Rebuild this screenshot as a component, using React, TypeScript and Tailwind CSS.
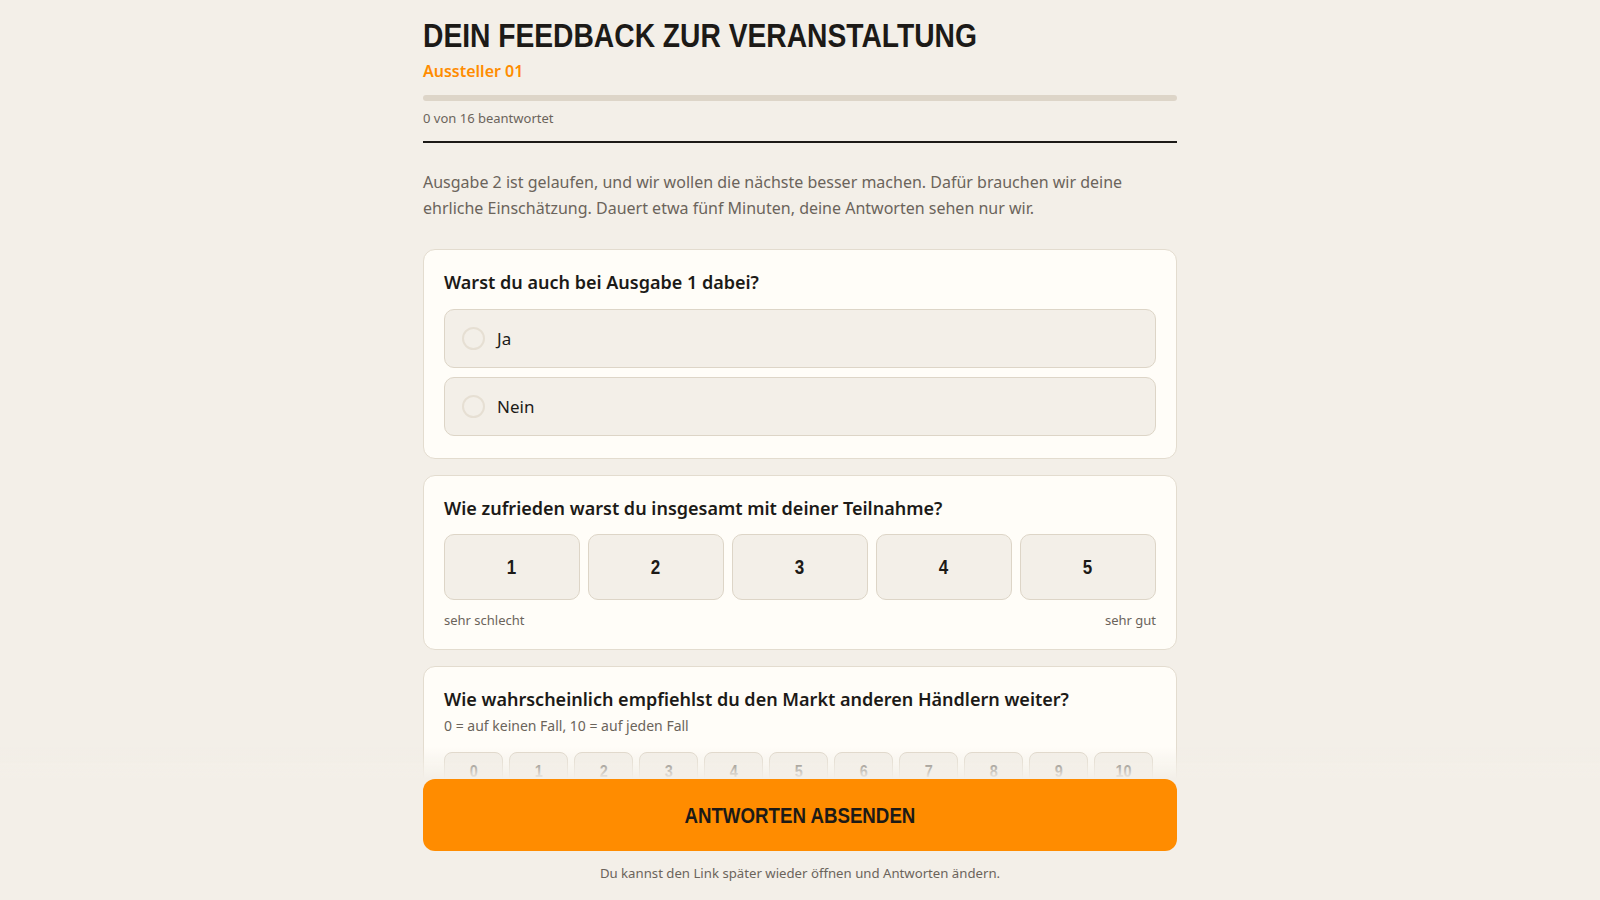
import React from 'react';

// no narrow face installed, so the Arial-narrow look is squeezed from Liberation Sans
const NARROW = "font-['Liberation_Sans_Narrow','Arial_Narrow','Liberation_Sans',sans-serif]";

function Card({ children, tight }: { children: React.ReactNode; tight?: boolean }) {
  return (
    <div
      className={`rounded-xl border border-[#e3dccf] bg-[#fffdf8] px-5 pt-5 ${tight ? 'pb-[20px]' : 'pb-[22px]'}`}
    >
      {children}
    </div>
  );
}

function Question({ children }: { children: React.ReactNode }) {
  return <h2 className="text-[18px] leading-[1.4] font-semibold text-[#1c1a17]">{children}</h2>;
}

function Narrow({ children }: { children: React.ReactNode }) {
  return <span className="inline-block scale-x-[0.85]">{children}</span>;
}

export default function App() {
  return (
    <div className="min-h-screen bg-[#f3efe8] font-['Segoe_UI','Noto_Sans',sans-serif] text-[#1c1a17]">
      <div className="mx-auto w-[754px] pt-[18px] pb-10">
        <header className="border-b-2 border-[#1c1a17] pb-[14px]">
          <h1
            className={`${NARROW} inline-block origin-left scale-x-[0.855] text-[33px] leading-[1.1] font-bold whitespace-nowrap`}
          >
            DEIN FEEDBACK ZUR VERANSTALTUNG
          </h1>
          <div className="mt-[5px] text-[16px] font-semibold text-[#ff8c00]">Aussteller 01</div>
          <div className="mt-[12px] h-[6px] rounded-full bg-[#ddd5c8]" />
          <div className="mt-[8px] text-[13px] leading-[18px] text-[#6b645b]">0 von 16 beantwortet</div>
        </header>

        <p className="mt-[27px] text-[16px] leading-[1.6] text-[#6b645b]">
          Ausgabe 2 ist gelaufen, und wir wollen die nächste besser machen. Dafür brauchen wir deine ehrliche
          Einschätzung. Dauert etwa fünf Minuten, deine Antworten sehen nur wir.
        </p>

        <div className="mt-[28px] flex flex-col gap-4">
          <Card>
            <Question>Warst du auch bei Ausgabe 1 dabei?</Question>
            <div className="mt-[13px] flex flex-col gap-[9px]">
              {['Ja', 'Nein'].map((o) => (
                <button
                  key={o}
                  className="flex items-center gap-3 rounded-[10px] border border-[#ddd5c7] bg-[#f3efe8] py-4 pl-[17px] text-left text-[17px] leading-[25px]"
                >
                  <span className="h-[23px] w-[23px] rounded-full border-2 border-[#e6dfd3]" />
                  {o}
                </button>
              ))}
            </div>
          </Card>

          <Card tight>
            <Question>Wie zufrieden warst du insgesamt mit deiner Teilnahme?</Question>
            <div className="mt-[13px] grid grid-cols-5 gap-2">
              {[1, 2, 3, 4, 5].map((n) => (
                <button
                  key={n}
                  className={`${NARROW} h-[66px] rounded-[10px] border border-[#ddd5c7] bg-[#f3efe8] text-[20px] font-bold`}
                >
                  <Narrow>{n}</Narrow>
                </button>
              ))}
            </div>
            <div className="mt-[11px] flex justify-between text-[13px] leading-[18px] text-[#6b645b]">
              <span>sehr schlecht</span>
              <span>sehr gut</span>
            </div>
          </Card>

          <Card>
            <Question>Wie wahrscheinlich empfiehlst du den Markt anderen Händlern weiter?</Question>
            <div className="mt-1 text-[14px] leading-[20px] text-[#6b645b]">
              0 = auf keinen Fall, 10 = auf jeden Fall
            </div>
            <div className="mt-4 flex gap-[6px]">
              {Array.from({ length: 11 }, (_, i) => i).map((n) => (
                <button
                  key={n}
                  className={`${NARROW} h-[52px] w-[59px] rounded-lg border border-[#ddd5c7] bg-[#f3efe8] pb-3 text-[17px] font-bold text-[#4a453e]`}
                >
                  <Narrow>{n}</Narrow>
                </button>
              ))}
            </div>
          </Card>
        </div>
      </div>

      <div className="fixed inset-x-0 bottom-0">
        <div className="h-8 bg-linear-to-b from-[#f3efe8]/0 to-[#f3efe8]" />
        <div className="bg-[#f3efe8] pb-[18px]">
          <div className="mx-auto w-[754px]">
            <button
              className={`${NARROW} h-[72px] w-full rounded-xl bg-[#ff8c00] text-[22px] font-bold text-[#1c1a17]`}
            >
              <Narrow>ANTWORTEN ABSENDEN</Narrow>
            </button>
            <div className="mt-[13px] text-center text-[13.2px] leading-[18px] text-[#6b645b]">
              Du kannst den Link später wieder öffnen und Antworten ändern.
            </div>
          </div>
        </div>
      </div>
    </div>
  );
}
